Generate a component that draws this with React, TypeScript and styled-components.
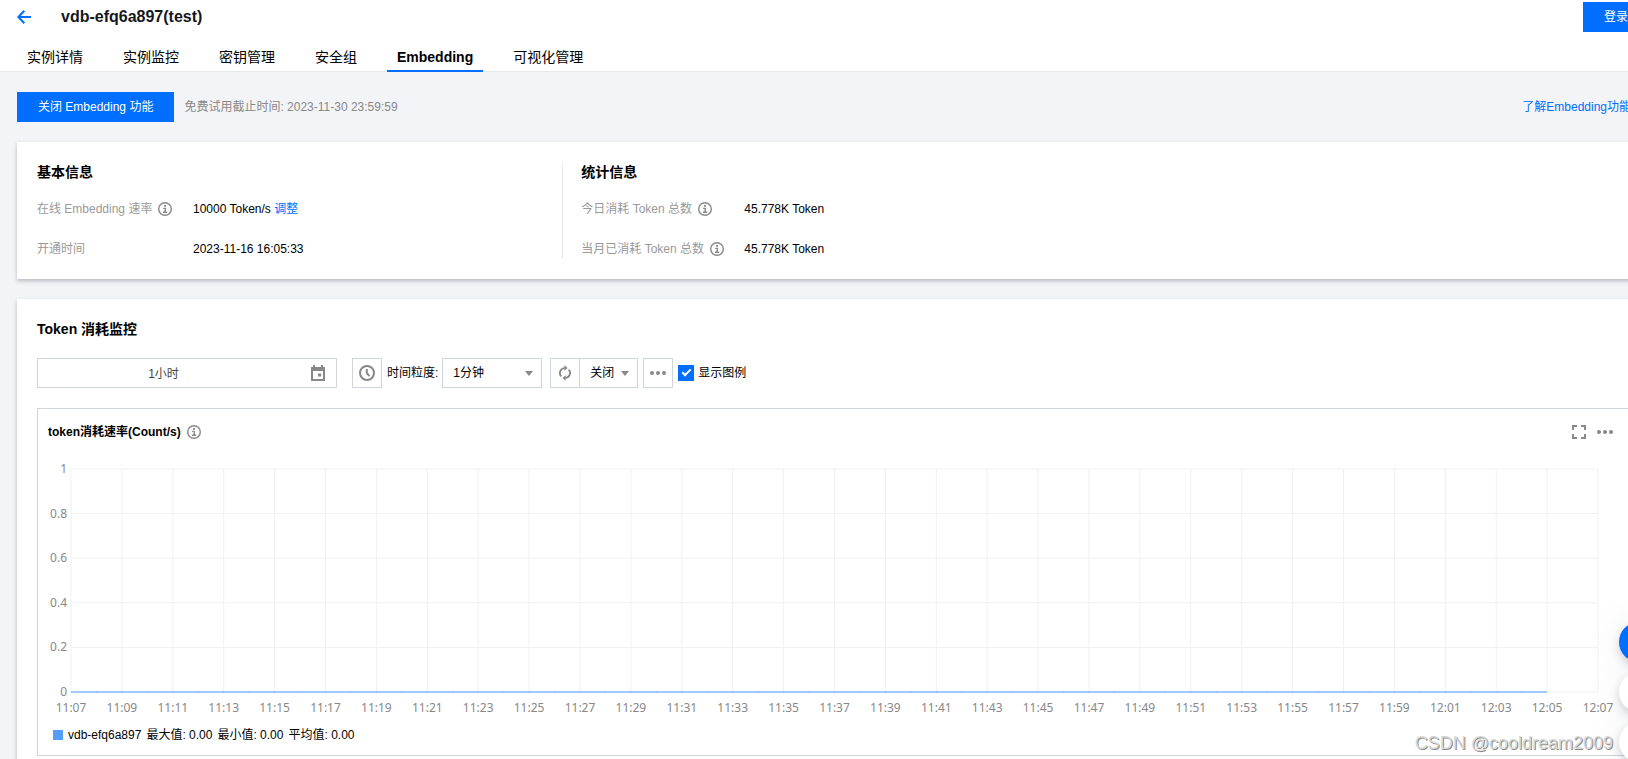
import React from "react";
import styled, { createGlobalStyle } from "styled-components";

const BLUE = "#006eff";
const GREY = "#888888";
const BORDER = "#cfd5de";

const GlobalStyle = createGlobalStyle`
  *, *::before, *::after { box-sizing: border-box; }
  body {
    margin: 0;
    background: #f3f4f7;
    color: #000;
    font-family: "Liberation Sans", "Noto Sans CJK SC", sans-serif;
    font-size: 12px;
    line-height: 18px;
  }
  h1, h2, h3, dl, dd, ul { margin: 0; padding: 0; }
  button, input, select { font: inherit; color: inherit; margin: 0; }
`;

const Shell = styled.div`
  position: relative;
  height: 100vh;
  overflow: hidden;
`;

/* The console runs slightly past the right edge of the window. */
const Canvas = styled.div`
  width: calc(100% + 24px);
`;

const Header = styled.header`
  background: #fff;
  border-bottom: 1px solid #e5e8ed;
`;

const TitleBar = styled.div`
  display: flex;
  align-items: center;
  height: 34px;
  padding: 0 3px 0 17px;
`;

const BackLink = styled.a`
  display: flex;
  width: 14px;
  margin-right: 30px;
  color: ${BLUE};
`;

const PageTitle = styled.h1`
  flex: 1;
  font-size: 16px;
  line-height: 20px;
  font-weight: 700;
  color: #16181d;
`;

const PrimaryButton = styled.button`
  height: 30px;
  padding: 0 21px;
  border: 0;
  background: ${BLUE};
  color: #fff;
  line-height: 28px;
  white-space: nowrap;
  cursor: pointer;
`;

const Tabs = styled.nav`
  display: flex;
  gap: 20px;
  height: 37px;
  padding-left: 17px;
`;

const Tab = styled.a<{ $active?: boolean }>`
  height: 38px;
  padding: 13px 10px 0;
  border-bottom: 2px solid ${(p) => (p.$active ? BLUE : "transparent")};
  font-size: 14px;
  line-height: 20px;
  font-weight: ${(p) => (p.$active ? 700 : 400)};
  color: #000;
  text-decoration: none;
  white-space: nowrap;
`;

const Main = styled.main`
  display: flex;
  flex-direction: column;
  gap: 20px;
  padding: 20px 0 0 17px;
`;

const ActionRow = styled.div`
  display: flex;
  align-items: center;
  gap: 10px;
  padding-right: 21px;
  color: ${GREY};
`;

const Link = styled.a<{ $end?: boolean }>`
  margin-left: ${(p) => (p.$end ? "auto" : "0")};
  color: ${BLUE};
  text-decoration: none;
`;

const Card = styled.section`
  padding: 20px;
  background: #fff;
  box-shadow: 0 2px 4px rgba(54, 58, 80, 0.32);
`;

const InfoCard = styled(Card)`
  display: flex;
`;

const InfoColumn = styled.div<{ $first?: boolean }>`
  flex: ${(p) => (p.$first ? "0 0 33%" : "1")};
  margin-right: ${(p) => (p.$first ? "18px" : "0")};
  border-right: ${(p) => (p.$first ? "1px solid #e5e8ed" : "0")};
`;

const CardTitle = styled.h2`
  font-size: 14px;
  line-height: 20px;
  font-weight: 700;
`;

const InfoList = styled.dl<{ $label: number }>`
  display: grid;
  grid-template-columns: ${(p) => p.$label}px 1fr;
  row-gap: 22px;
  padding: 18px 0 1px;

  dt {
    display: flex;
    align-items: center;
    gap: 6px;
    color: #999;
  }
`;

const Toolbar = styled.div`
  display: flex;
  align-items: center;
  height: 30px;
  margin: 19px 0 20px;
`;

const DateField = styled.label`
  display: flex;
  align-items: center;
  width: 300px;
  height: 30px;
  margin-right: 15px;
  padding-right: 11px;
  border: 1px solid ${BORDER};
  color: ${GREY};

  input {
    flex: 1;
    min-width: 0;
    height: 28px;
    padding: 0 22px 2px 0;
    border: 0;
    outline: 0;
    background: transparent;
    color: #444;
    text-align: center;
  }
`;

const IconButton = styled.button`
  display: flex;
  align-items: center;
  justify-content: center;
  width: 30px;
  height: 30px;
  padding: 0;
  border: 1px solid ${BORDER};
  background: #fff;
  color: ${GREY};
  cursor: pointer;
`;

const FieldLabel = styled.label`
  margin: 0 4px 0 5px;
`;

const SelectBox = styled.div<{ $width: number; $joined?: boolean }>`
  position: relative;
  width: ${(p) => p.$width}px;
  margin-left: ${(p) => (p.$joined ? "-1px" : "0")};
  margin-right: ${(p) => (p.$joined ? "5px" : "8px")};

  &::after {
    content: "";
    position: absolute;
    right: 9px;
    top: 13px;
    border: 4px solid transparent;
    border-top: 5px solid ${GREY};
    border-bottom: 0;
    pointer-events: none;
  }

  select {
    width: 100%;
    height: 30px;
    padding: 0 20px 0 10px;
    border: 1px solid ${BORDER};
    border-radius: 0;
    background: #fff;
    appearance: none;
  }
`;

const CheckLabel = styled.label`
  display: flex;
  align-items: center;
  gap: 4px;
  margin-left: 5px;

  input {
    position: relative;
    width: 16px;
    height: 16px;
    background: ${BLUE};
    appearance: none;
  }

  input:checked::after {
    content: "";
    position: absolute;
    left: 4px;
    top: 4px;
    width: 9px;
    height: 5px;
    border: solid #fff;
    border-width: 0 0 2px 2px;
    transform: rotate(-45deg);
  }
`;

const Panel = styled.article`
  padding: 14px 10px 11px;
  border: 1px solid ${BORDER};
`;

const PanelHeader = styled.div`
  display: flex;
  align-items: center;
  gap: 6px;
  padding-right: 8px;
  color: ${GREY};
`;

const PanelTitle = styled.h3`
  font-size: 12px;
  line-height: 18px;
  font-weight: 700;
  color: #000;
`;

const PanelTools = styled.div`
  display: flex;
  gap: 11px;
  margin-left: auto;

  button {
    display: flex;
    padding: 0;
    border: 0;
    background: none;
    color: ${GREY};
  }
`;

const Plot = styled.div`
  height: 223px;
  margin: 28px 23px 0 23px;

  svg { display: block; overflow: visible; }
  text {
    font-family: "Noto Sans", sans-serif;
    font-size: 12px;
    fill: ${GREY};
  }
`;

const Legend = styled.div`
  display: flex;
  align-items: center;
  gap: 5px;
  margin-top: 34px;
  padding-left: 5px;
`;

const Swatch = styled.span`
  width: 10px;
  height: 10px;
  background: #539dff;
`;

const FloatMenu = styled.div`
  position: absolute;
  right: -31px;
  bottom: -3px;
  display: flex;
  flex-direction: column;
  gap: 10px;
`;

const FloatButton = styled.button<{ $primary?: boolean }>`
  width: 40px;
  height: 40px;
  border: 0;
  border-radius: 50%;
  background: ${(p) => (p.$primary ? BLUE : "#fff")};
  box-shadow: 0 4px 10px rgba(54, 58, 80, 0.22), 0 0 36px rgba(54, 58, 80, 0.08);
`;

const Watermark = styled.div`
  position: absolute;
  right: 15px;
  bottom: 5px;
  font-size: 18px;
  line-height: 22px;
  color: #d8d8d8;
  text-shadow: 1px 1px 0 #8c8c8c;
`;

const InfoIcon = () => (
  <svg width="14" height="14" viewBox="0 0 14 14" fill="none" stroke={GREY} aria-hidden="true">
    <circle cx="7" cy="7" r="6.3" strokeWidth="1.4" />
    <path d="M7 3v1.8" strokeWidth="2" />
    <path d="M5.2 6.4H7.2V10M5 10.3H9.2" strokeWidth="1.4" />
  </svg>
);

const DotsIcon = () => (
  <svg width="16" height="14" viewBox="0 0 16 14" fill="currentColor" aria-hidden="true">
    <circle cx="2" cy="7" r="2" />
    <circle cx="8" cy="7" r="2" />
    <circle cx="14" cy="7" r="2" />
  </svg>
);

const minuteLabel = (i: number) => {
  const total = 11 * 60 + 7 + i * 2;
  return `${Math.floor(total / 60)}:${String(total % 60).padStart(2, "0")}`;
};

const INTERVALS = 30;
const PLOT_HEIGHT = 223;
const Y_LABELS = ["1", "0.8", "0.6", "0.4", "0.2", "0"];

const Chart = () => (
  <Plot>
    <svg width="100%" height={PLOT_HEIGHT} role="img" aria-label="token消耗速率">
      {Y_LABELS.map((label, i) => {
        const y = (PLOT_HEIGHT * i) / 5;
        return (
          <g key={label}>
            <line x1="0" x2="100%" y1={y} y2={y} stroke="#f1f1f1" />
            <text x="-4" y={y + 4} textAnchor="end">{label}</text>
          </g>
        );
      })}
      {Array.from({ length: INTERVALS + 1 }, (_, i) => {
        const x = `${(i * 100) / INTERVALS}%`;
        return (
          <g key={i}>
            <line x1={x} x2={x} y1="0" y2={PLOT_HEIGHT} stroke="#f1f1f1" />
            <text x={x} y={PLOT_HEIGHT + 20} textAnchor="middle">{minuteLabel(i)}</text>
          </g>
        );
      })}
      <line x1="0" x2={`${(29 * 100) / INTERVALS}%`} y1={PLOT_HEIGHT} y2={PLOT_HEIGHT} stroke="#a2c9ff" strokeWidth="2" />
      {Array.from({ length: 57 }, (_, i) => {
        const x = `${((i + 1) * 50) / INTERVALS}%`;
        return <line key={i} x1={x} x2={x} y1={PLOT_HEIGHT - 1} y2={PLOT_HEIGHT + 1} stroke="#86b8fc" />;
      })}
    </svg>
  </Plot>
);

const TABS = ["实例详情", "实例监控", "密钥管理", "安全组", "Embedding", "可视化管理"];

export default function App() {
  return (
    <Shell>
      <GlobalStyle />
      <Canvas>
        <Header>
          <TitleBar>
            <BackLink href="#" aria-label="返回">
              <svg width="14" height="14" viewBox="0 0 14 14" fill="none" stroke="currentColor" strokeWidth="2">
                <path d="M7.3 0.7L1.4 7l5.9 6.3M1.5 7H14" />
              </svg>
            </BackLink>
            <PageTitle>vdb-efq6a897(test)</PageTitle>
            <PrimaryButton>登录</PrimaryButton>
          </TitleBar>
          <Tabs>
            {TABS.map((tab) => (
              <Tab key={tab} href="#" $active={tab === "Embedding"}>{tab}</Tab>
            ))}
          </Tabs>
        </Header>

        <Main>
          <ActionRow>
            <PrimaryButton>关闭 Embedding 功能</PrimaryButton>
            <span>免费试用截止时间: 2023-11-30 23:59:59</span>
            <Link href="#" $end>了解Embedding功能</Link>
          </ActionRow>

          <InfoCard>
            <InfoColumn $first>
              <CardTitle>基本信息</CardTitle>
              <InfoList $label={156}>
                <dt>在线 Embedding 速率 <InfoIcon /></dt>
                <dd>10000 Token/s <Link href="#">调整</Link></dd>
                <dt>开通时间</dt>
                <dd>2023-11-16 16:05:33</dd>
              </InfoList>
            </InfoColumn>
            <InfoColumn>
              <CardTitle>统计信息</CardTitle>
              <InfoList $label={163}>
                <dt>今日消耗 Token 总数 <InfoIcon /></dt>
                <dd>45.778K Token</dd>
                <dt>当月已消耗 Token 总数 <InfoIcon /></dt>
                <dd>45.778K Token</dd>
              </InfoList>
            </InfoColumn>
          </InfoCard>

          <Card>
            <CardTitle>Token 消耗监控</CardTitle>
            <Toolbar>
              <DateField>
                <input type="text" defaultValue="1小时" aria-label="时间范围" />
                <svg width="14" height="16" viewBox="0 0 14 16" fill="currentColor" aria-hidden="true">
                  <path fillRule="evenodd" d="M0 2h2V0h2v2h6V0h2v2h2v14H0zM2 6v8h10V6z" />
                  <path d="M7 8.5h3.2v3H7z" />
                </svg>
              </DateField>
              <IconButton aria-label="选择时间">
                <svg width="16" height="16" viewBox="0 0 16 16" fill="none" stroke="currentColor" strokeWidth="2">
                  <circle cx="8" cy="8" r="7" />
                  <path d="M7.8 4v4.2l2.6 3" />
                </svg>
              </IconButton>
              <FieldLabel htmlFor="granularity">时间粒度:</FieldLabel>
              <SelectBox $width={100}>
                <select id="granularity"><option>1分钟</option></select>
              </SelectBox>
              <IconButton aria-label="刷新">
                <svg width="12" height="16" viewBox="0 0 12 16" fill="none" stroke="currentColor" strokeWidth="1.8">
                  <path d="M2.3 11.4A4.9 4.9 0 0 1 5.8 3.1M9.7 4.6A4.9 4.9 0 0 1 6.2 12.9" />
                  <path d="M5.4 0.2v5.6L8.6 3zM6.6 10.2v5.6L3.4 13z" fill="currentColor" stroke="none" />
                </svg>
              </IconButton>
              <SelectBox $width={59} $joined>
                <select aria-label="自动刷新"><option>关闭</option></select>
              </SelectBox>
              <IconButton aria-label="更多"><DotsIcon /></IconButton>
              <CheckLabel>
                <input type="checkbox" defaultChecked />
                显示图例
              </CheckLabel>
            </Toolbar>

            <Panel>
              <PanelHeader>
                <PanelTitle>token消耗速率(Count/s)</PanelTitle>
                <InfoIcon />
                <PanelTools>
                  <button aria-label="全屏">
                    <svg width="14" height="14" viewBox="0 0 14 14" fill="none" stroke="currentColor" strokeWidth="2">
                      <path d="M1 5V1h4M9 1h4v4M13 9v4H9M5 13H1V9" />
                    </svg>
                  </button>
                  <button aria-label="更多操作"><DotsIcon /></button>
                </PanelTools>
              </PanelHeader>
              <Chart />
              <Legend>
                <Swatch />
                <span>vdb-efq6a897</span>
                <span>最大值: 0.00</span>
                <span>最小值: 0.00</span>
                <span>平均值: 0.00</span>
              </Legend>
            </Panel>
          </Card>
        </Main>
      </Canvas>
      <FloatMenu>
        <FloatButton $primary aria-label="咨询" />
        <FloatButton aria-label="反馈" />
        <FloatButton aria-label="帮助" />
      </FloatMenu>
      <Watermark>CSDN @cooldream2009</Watermark>
    </Shell>
  );
}
